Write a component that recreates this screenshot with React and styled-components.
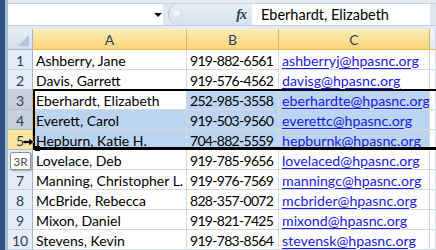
import React from 'react';
import styled, { createGlobalStyle } from 'styled-components';

const rows = [
  { n: 1, name: 'Ashberry, Jane', phone: '919-882-6561', email: 'ashberryj@hpasnc.org' },
  { n: 2, name: 'Davis, Garrett', phone: '919-576-4562', email: 'davisg@hpasnc.org' },
  { n: 3, name: 'Eberhardt, Elizabeth', phone: '252-985-3558', email: 'eberhardte@hpasnc.org', sel: 'active', head: 'gray' },
  { n: 4, name: 'Everett, Carol', phone: '919-503-9560', email: 'everettc@hpasnc.org', sel: 'all', head: 'gray' },
  { n: 5, name: 'Hepburn, Katie H.', phone: '704-882-5559', email: 'hepburnk@hpasnc.org', sel: 'all', head: 'hot' },
  { n: 6, name: 'Lovelace, Deb', phone: '919-785-9656', email: 'lovelaced@hpasnc.org' },
  { n: 7, name: 'Manning, Christopher L.', phone: '919-976-7569', email: 'manningc@hpasnc.org' },
  { n: 8, name: 'McBride, Rebecca', phone: '828-357-0072', email: 'mcbrider@hpasnc.org' },
  { n: 9, name: 'Mixon, Daniel', phone: '919-821-7425', email: 'mixond@hpasnc.org' },
  { n: 10, name: 'Stevens, Kevin', phone: '919-783-8564', email: 'stevensk@hpasnc.org' },
];

const GlobalStyle = createGlobalStyle`
  html, body { margin: 0; padding: 0; background: #fff; }
  body { font-family: Lato, "Liberation Sans", sans-serif; }
`;

const Window = styled.div`
  width: 436px;
  height: 250px;
  overflow: hidden;
  display: flex;
  border-left: 5px solid #2f5482;
  box-sizing: border-box;
`;

const Edge = styled.div`
  width: 3px;
  background: #a9c0dd;
  flex-shrink: 0;
`;

const Main = styled.div`
  flex: 1;
  display: flex;
  flex-direction: column;
  min-width: 0;
  overflow: hidden;
`;

const TopBand = styled.div`
  height: 4px;
  background: #e6ebf2;
  border-bottom: 1px solid #c9d2de;
  box-sizing: border-box;
`;

const FormulaBar = styled.div`
  height: 21px;
  display: flex;
  align-items: stretch;
  background: #dfe7f1;
`;

const NameBox = styled.div`
  width: 155px;
  background: #fff;
  display: flex;
  align-items: center;
  justify-content: flex-end;
  padding-right: 1px;
  box-sizing: border-box;
`;

const DropArrow = styled.span`
  width: 0;
  height: 0;
  border-left: 4px solid transparent;
  border-right: 4px solid transparent;
  border-top: 4px solid #111;
`;

const FxArea = styled.div`
  width: 84px;
  position: relative;
  display: flex;
  align-items: center;
  justify-content: flex-end;
  padding-right: 6px;
  box-sizing: border-box;
  border-radius: 10px 0 0 10px;
  margin-left: 5px;
  background: linear-gradient(#e9eff7, #d7e2ef);
  border-left: 1px solid #b3c3d6;
`;

const Knob = styled.span`
  position: absolute;
  left: 4px;
  top: 5px;
  width: 10px;
  height: 10px;
  border-radius: 50%;
  background: radial-gradient(circle at 40% 40%, #ffffff, #c3cfdd);
`;

const Fx = styled.span`
  font-family: "Liberation Serif", serif;
  font-style: italic;
  font-weight: bold;
  font-size: 14px;
  color: #2d3f58;
  letter-spacing: -1px;
`;

const FormulaInput = styled.div`
  flex: 1;
  background: #fff;
  display: flex;
  align-items: center;
  padding-left: 9px;
  font-size: 14.5px;
  color: #000;
  border-right: 6px solid #dfe7f1;
`;

const Gap = styled.div`
  height: 4px;
  background: #e4ebf4;
  border-top: 1px solid #c2cedc;
  box-sizing: border-box;
`;

const Sheet = styled.div`
  position: relative;
  display: grid;
  grid-template-columns: 25px 154px 92px 151px 1fr;
  grid-auto-rows: 20px;
  grid-template-rows: 21px;
`;

const Corner = styled.div`
  background: linear-gradient(#e8eef7, #d4deeb);
  border-right: 1px solid #9eb6ce;
  border-bottom: 1px solid #9eb6ce;
  position: relative;
  &::after {
    content: '';
    position: absolute;
    right: 3px;
    bottom: 3px;
    border-left: 11px solid transparent;
    border-bottom: 11px solid #b6c4d6;
  }
`;

const ColHead = styled.div`
  background: ${(p) => (p.$on ? 'linear-gradient(#fdeeb7, #fbd67a)' : 'linear-gradient(#f3f6fb, #e1e8f2)')};
  border-right: 1px solid ${(p) => (p.$on ? '#e2b657' : '#c5d3e5')};
  border-bottom: 1px solid #f2b94a;
  display: flex;
  align-items: center;
  justify-content: center;
  font-size: 14px;
  color: #27415f;
`;

const rowHeadBg = { gray: '#c6cfda', hot: '#fbe49c' };

const RowHead = styled.div`
  background: ${(p) => rowHeadBg[p.$kind] || '#e4ecf7'};
  border-right: 1px solid ${(p) => (p.$kind ? '#e2b657' : '#9eb6ce')};
  border-bottom: 1px solid ${(p) => (p.$kind ? '#b4bfcc' : '#c5d3e5')};
  display: flex;
  align-items: center;
  justify-content: center;
  padding-top: 1px;
  font-size: 14px;
  color: #27415f;
  box-sizing: border-box;
`;

const Cell = styled.div`
  background: ${(p) => (p.$sel ? '#bbd4f2' : '#fff')};
  border-right: 1px solid #d6dadf;
  border-bottom: 1px solid #d6dadf;
  display: flex;
  align-items: center;
  padding: 1px 0 0 3px;
  font-size: 14px;
  letter-spacing: ${(p) => p.$tight || 0};
  color: #000;
  white-space: nowrap;
  overflow: hidden;
  box-sizing: border-box;
`;

const Link = styled.span`
  color: #1a1ae6;
  font-size: 14.2px;
  text-decoration: underline;
  text-underline-offset: 2px;
`;

const DragFrame = styled.div`
  position: absolute;
  left: 25px;
  right: -20px;
  top: 60px;
  height: 61px;
  border: 2px solid #000;
  border-bottom-width: 3px;
  box-sizing: border-box;
  pointer-events: none;
`;

const Handle = styled.div`
  position: absolute;
  left: 27px;
  top: 117px;
  width: 5px;
  height: 5px;
  background: #000;
`;

const MoveArrow = styled.svg`
  position: absolute;
  left: 15px;
  top: 109px;
`;

const Tip = styled.div`
  position: absolute;
  left: 2px;
  top: 123px;
  width: 21px;
  height: 18px;
  background: #fff;
  border: 1px solid #8e8e8e;
  border-radius: 2px;
  box-shadow: 1px 1px 2px rgba(0, 0, 0, 0.3);
  font-size: 12px;
  color: #555;
  display: flex;
  align-items: center;
  justify-content: center;
  box-sizing: border-box;
`;

export default function App() {
  return (
    <>
      <GlobalStyle />
      <Window>
        <Edge />
        <Main>
          <TopBand />
          <FormulaBar>
            <NameBox>
              <DropArrow />
            </NameBox>
            <FxArea>
              <Knob />
              <Fx>fx</Fx>
            </FxArea>
            <FormulaInput>Eberhardt, Elizabeth</FormulaInput>
          </FormulaBar>
          <Gap />
          <Sheet>
            <Corner />
            <ColHead $on>A</ColHead>
            <ColHead $on>B</ColHead>
            <ColHead $on>C</ColHead>
            <ColHead />
            {rows.map((r) => (
              <React.Fragment key={r.n}>
                <RowHead $kind={r.head}>{r.n}</RowHead>
                <Cell $sel={r.sel === 'all'}>{r.name}</Cell>
                <Cell $sel={!!r.sel} $tight="-0.7px">{r.phone}</Cell>
                <Cell $sel={!!r.sel}>
                  <Link>{r.email}</Link>
                </Cell>
                <Cell />
              </React.Fragment>
            ))}
            <DragFrame />
            <Handle />
            <MoveArrow width="12" height="8" viewBox="0 0 12 8">
              <path d="M0 2.5h6V0l5 4-5 4V5.5H0z" fill="#000" stroke="#fff" strokeWidth="0.6" />
            </MoveArrow>
            <Tip>3R</Tip>
          </Sheet>
        </Main>
      </Window>
    </>
  );
}
